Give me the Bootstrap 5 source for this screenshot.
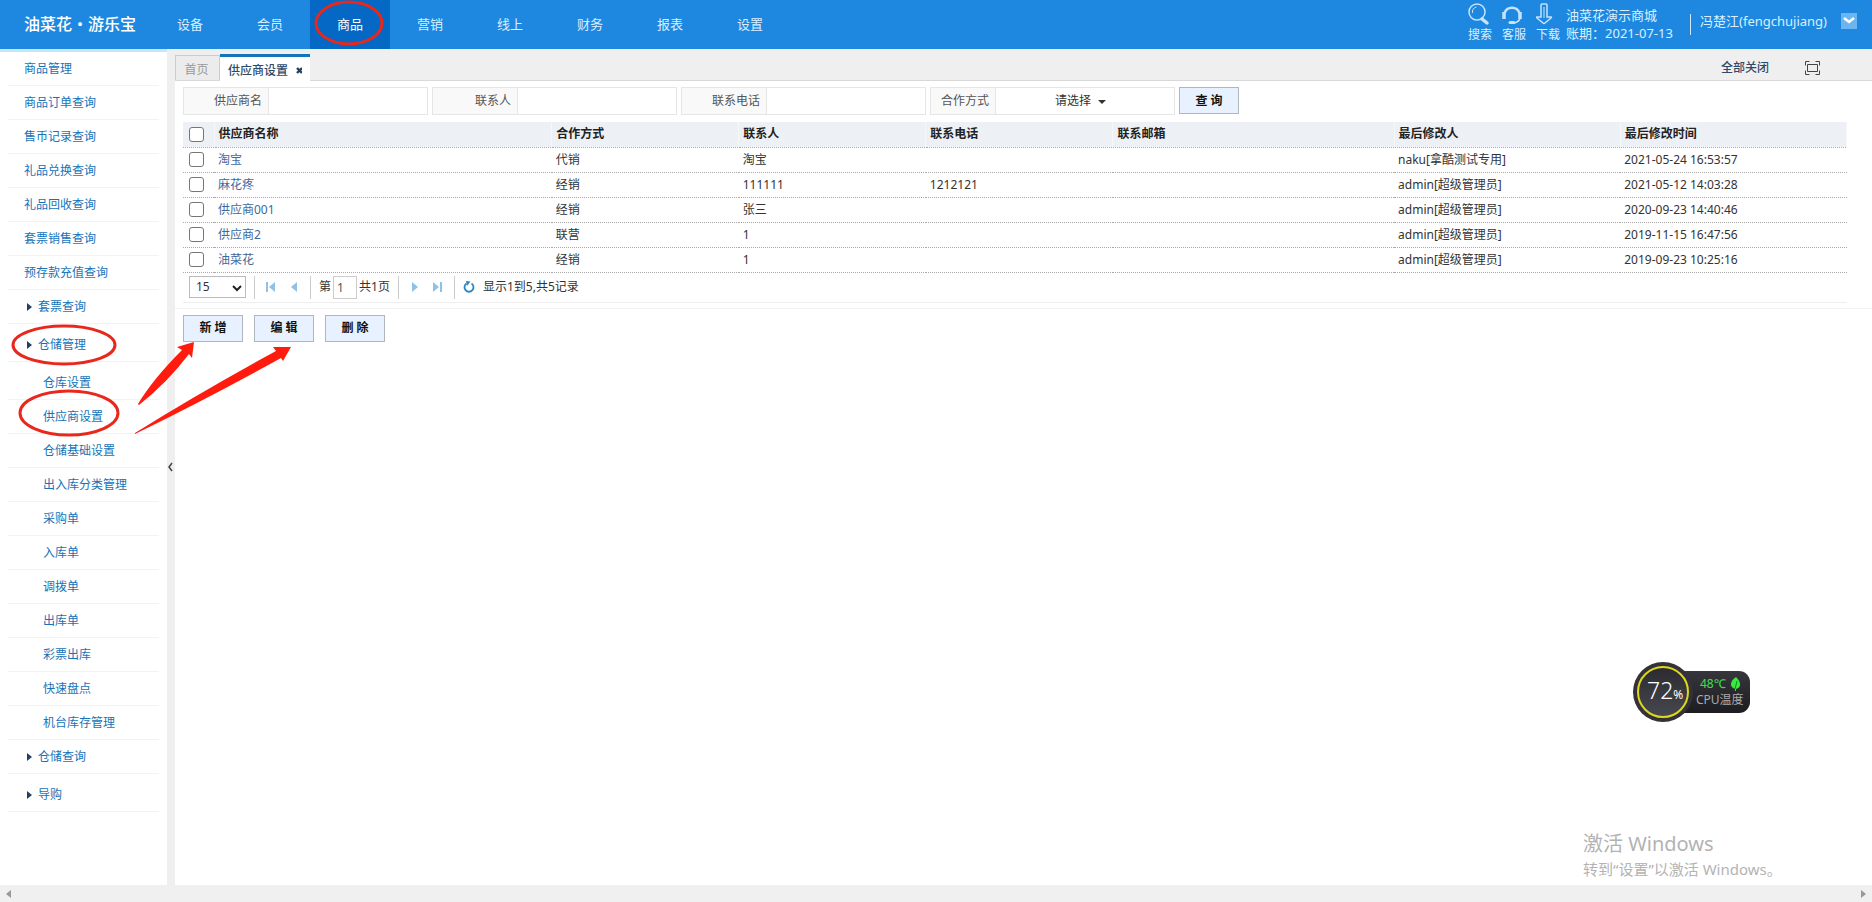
<!DOCTYPE html>
<html lang="zh-CN">
<head>
<meta charset="utf-8">
<meta name="viewport" content="width=device-width, initial-scale=1">
<title>供应商设置</title>
<link rel="stylesheet" href="https://cdn.jsdelivr.net/npm/bootstrap@5.3.0/dist/css/bootstrap.min.css">
<style>
body{font-family:"Noto Sans","Noto Sans CJK SC",sans-serif;font-size:12px;line-height:18px;color:#333;background:#fff}
a{text-decoration:none}
.topbar{height:49px;background:#1e88e1;color:#d9efff}
.topbar a{color:#d9efff}
.brand-name{width:150px;padding:0 0 2px 24px;font-size:16px;font-weight:500;color:#fff;white-space:nowrap}
.main-nav a{width:80px;height:49px;font-size:13px;position:relative;padding-bottom:2px}
.main-nav a.current{background:#0468c4;color:#fff}
.ring{position:absolute;fill:none;stroke:#e8281c;stroke-width:3;pointer-events:none;overflow:visible}
.nav-ring{left:5px;top:1px}
.quick{padding-bottom:4px}
.quick a{width:34px;line-height:18px}
.quick a:last-child{width:30px}
.quick svg{fill:none;stroke:#c4e4fd;stroke-width:1.5}
.account{font-size:13px;line-height:18px}
.store{padding-bottom:2px;width:111px}
.v-rule{width:1px;height:21px;background:#cfe8fd;margin:0 9px 0 13px}
.user-toggle{width:16px;height:16px;background:#6db5f0;border:0;margin-left:14px;margin-right:15px}
.sidebar{width:167px;border-top:3px solid #c4e7fc;padding:0 8px}
.sidebar ul{margin:0;padding:0;list-style:none}
.sidebar li a{display:flex;align-items:center;height:34px;padding-left:16px;border-bottom:1px solid #f1f3f5;color:#1673b8;position:relative}
.sidebar .sub a{padding-left:35px}
.sidebar .gap-top{padding-top:4px}
.sidebar .fold::before{content:"";border:4px solid transparent;border-left:5px solid #23415f;border-right:0;margin:1px 6px 0 3px}
.ring-a{left:5px;top:-2px}
.ring-b{left:12px;top:-10px}
.splitter{width:8px;background:#efefef}
.splitter button{border:0;background:none;width:8px;height:16px}
.tabbar{height:32px;background:#efefef;border-bottom:1px solid #d8d8d8;color:#2f4a68;font-weight:500}
.tab-home{width:45px;height:25px;border:1px solid #ccc;border-width:1px 1px 0;color:#999;font-weight:400;background:#ececec;padding-right:2px;padding-top:4px}
.tab-open{width:90px;height:27px;margin-bottom:-1px;border-top:3px solid #1275bb;background:#fff;color:#2f4a68;padding-top:4px}
.tab-open button{border:0;background:none;width:10px}
.tabbar .all-close{color:#2f4a68}
.tab-tools{margin-right:45px;padding-bottom:3px}
.workspace{padding:6px 25px 0 8px}
.filter{height:28px;border:1px solid #e6e6e6;background:#f9f9f9;width:245px;color:#555}
.filter label{padding-right:6px;text-align:right;width:84px;flex:none}
.filter .tight{width:64px}
.filter input,.filter select{border:0;border-left:1px solid #e6e6e6;background-color:#fff;min-width:0;height:26px;border-radius:0;outline:0}
.filter select{appearance:none;color:#333;padding:0 0 0 59px;background-image:url("data:image/svg+xml,%3Csvg xmlns='http://www.w3.org/2000/svg' width='8' height='4'%3E%3Cpath d='M0 0h8L4 4z' fill='%23333'/%3E%3C/svg%3E");background-repeat:no-repeat;background-position:102px 12px}
.act{width:60px;height:27px;border:1px solid #b1b6bd;background:#e8f1ff;color:#111;font-weight:700;padding:0;line-height:18px}
.grid{width:100%;table-layout:fixed;margin:7px 0 0}
.grid th,.grid td{height:25px;padding:0 4px;border-bottom:1px dotted #aaa;white-space:nowrap}
.grid th{background:#edf0f5;font-weight:700;color:#222;border-right:1px solid #f5f7f9}
.grid a{color:#40699e}
.grid .tick{padding:0 0 0 6px;line-height:0}
.grid input{appearance:none;width:15px;height:15px;border:1px solid #767676;border-radius:3px;background:#fff;margin:0;vertical-align:middle}
.c-name{width:20.3%}.c-std{width:11.25%}.c-mail{width:16.9%}.c-who{width:13.6%}.c-time{width:13.6%}
.pager{height:30px;padding-left:6px;border-bottom:1px solid #eee}
.pager select{width:57px;height:22px;border:1px solid #bbb;appearance:none;padding:0 6px;border-radius:0;color:#333;background:#fff url("data:image/svg+xml,%3Csvg xmlns='http://www.w3.org/2000/svg' width='10' height='7'%3E%3Cpath d='M1 1l4 4 4-4' fill='none' stroke='%23222' stroke-width='2'/%3E%3C/svg%3E") no-repeat 42px 8px}
.pager .page-no{width:24px;height:23px;border:1px solid #ccc;padding:0 3px;color:#555;margin:0 2px}
.pager .bar{width:1px;height:23px;background:#ccc}
.pager button{border:0;background:none;padding:0;width:12px;height:18px;line-height:0}
.pager button svg{fill:#8fc2e6}
.page-set{width:87px}
.nav-set{width:55px}
.cut{border-top:1px solid #f2f2f2;margin:5px -25px 0 -8px}
.act-row{gap:11px;padding-top:6px}
.arrows{position:absolute;left:-40px;top:290px;fill:#ff1c0e;pointer-events:none}
.monitor{position:absolute;right:122px;bottom:163px;width:117px;height:60px}
.monitor .pill{width:70px;height:42px;border-radius:0 11px 11px 0;background:linear-gradient(#36363c,#1d1c21);color:#aaa;line-height:16px}
.monitor .dial{position:absolute;left:0;top:0;width:60px;height:60px;border-radius:50%;background:#343238;padding:4px}
.monitor .face{border:2px solid #dcd91c;border-radius:50%;background:linear-gradient(#2b2b31,#47474f);color:#fff;font-size:23px;line-height:44px;font-weight:300;padding-left:8px;white-space:nowrap}
.monitor .pct{font-size:12px;font-weight:400}
.temp{color:#3fe04c}
.watermark{position:absolute;right:96px;bottom:4px;width:193px;color:#b3b3b3;font-size:15px;line-height:24px;white-space:nowrap}
.watermark strong{font-weight:400;font-size:20px}
.hscroll{height:17px;background:#f0f0f0;padding:0 6px}
.hscroll svg{fill:#999}
</style>
</head>
<body class="d-flex flex-column min-vh-100">
<header class="topbar d-flex align-items-center">
  <div class="brand-name">油菜花・游乐宝</div>
  <nav class="main-nav d-flex">
    <a class="d-flex align-items-center justify-content-center" href="#">设备</a>
    <a class="d-flex align-items-center justify-content-center" href="#">会员</a>
    <a class="current d-flex align-items-center justify-content-center" href="#">商品<svg class="ring nav-ring" width="68" height="44"><ellipse cx="34" cy="22" rx="33" ry="21"/></svg></a>
    <a class="d-flex align-items-center justify-content-center" href="#">营销</a>
    <a class="d-flex align-items-center justify-content-center" href="#">线上</a>
    <a class="d-flex align-items-center justify-content-center" href="#">财务</a>
    <a class="d-flex align-items-center justify-content-center" href="#">报表</a>
    <a class="d-flex align-items-center justify-content-center" href="#">设置</a>
  </nav>
  <div class="quick d-flex ms-auto">
    <a class="d-flex flex-column" href="#"><svg width="22" height="24"><circle cx="9" cy="10" r="8"/><path d="M4.500 11a5 5 0 0 1 4-6" stroke-width="1"/><path d="M13 17l2-2" /><path d="M14 17l5 4" stroke-width="3.500" stroke-linecap="round"/></svg>搜索</a>
    <a class="d-flex flex-column" href="#"><svg width="22" height="24"><path d="M2.500 11a8 8 0 0 1 15 0" stroke-width="2.500"/><path d="M2 10v7M18 10v7" stroke-width="3.500"/><path d="M18 17c-2 3-4 4-7 4" stroke-width="1.500"/><path d="M8 20.500h4" stroke-width="3" stroke-linecap="round"/></svg>客服</a>
    <a class="d-flex flex-column" href="#"><svg width="22" height="24"><path d="M5 3q0-1 1-1h4q1 0 1 1v12h4q1 0 0 1l-6 5q-1 1-2 0l-6-5q-1-1 0-1h4z"/><path d="M8 5v11" stroke-width="1"/></svg>下载</a>
  </div>
  <div class="account store">油菜花演示商城<br>账期：2021-07-13</div>
  <div class="v-rule"></div>
  <a class="account pb-2" href="#">冯楚江(fengchujiang)</a>
  <button class="user-toggle p-0 d-flex align-items-center justify-content-center mb-2" aria-label="账户菜单"><svg width="12" height="8"><path d="M1 1l5 4 5-4" fill="none" stroke="#fff" stroke-width="2.5"/></svg></button>
</header>

<div class="d-flex flex-grow-1">
  <aside class="sidebar flex-shrink-0">
    <ul>
      <li><a href="#">商品管理</a></li>
      <li><a href="#">商品订单查询</a></li>
      <li><a href="#">售币记录查询</a></li>
      <li><a href="#">礼品兑换查询</a></li>
      <li><a href="#">礼品回收查询</a></li>
      <li><a href="#">套票销售查询</a></li>
      <li><a href="#">预存款充值查询</a></li>
      <li><a class="fold" href="#">套票查询</a></li>
      <li class="gap-top"><a class="fold" href="#">仓储管理<svg class="ring ring-a" width="102" height="39"><ellipse cx="51" cy="19" rx="51" ry="19"/></svg></a>
        <ul class="sub gap-top">
          <li><a href="#">仓库设置</a></li>
          <li><a href="#">供应商设置<svg class="ring ring-b" width="98" height="46"><ellipse cx="49" cy="23" rx="49" ry="22"/></svg></a></li>
          <li><a href="#">仓储基础设置</a></li>
          <li><a href="#">出入库分类管理</a></li>
          <li><a href="#">采购单</a></li>
          <li><a href="#">入库单</a></li>
          <li><a href="#">调拨单</a></li>
          <li><a href="#">出库单</a></li>
          <li><a href="#">彩票出库</a></li>
          <li><a href="#">快速盘点</a></li>
          <li><a href="#">机台库存管理</a></li>
        </ul>
      </li>
      <li><a class="fold" href="#">仓储查询</a></li>
      <li class="gap-top"><a class="fold" href="#">导购</a></li>
    </ul>
  </aside>
  <div class="splitter flex-shrink-0 d-flex align-items-center">
    <button class="p-0 d-flex align-items-center" aria-label="收起菜单"><svg width="7" height="10"><path d="M5 1L2 5l3 4" fill="none" stroke="#444" stroke-width="1.5"/></svg></button>
  </div>
  <main class="flex-grow-1 position-relative">
    <div class="tabbar d-flex align-items-end">
      <a class="tab-home d-flex align-items-center justify-content-center" href="#">首页</a>
      <div class="tab-open d-flex align-items-center ps-2">供应商设置<button class="p-0 ms-1 d-flex" aria-label="关闭标签"><svg class="ms-1" width="8" height="8"><path d="M1 1l5 5M6 1L1 6" stroke="#23415f" stroke-width="2.4"/></svg></button></div>
      <div class="tab-tools d-flex align-items-center ms-auto">
        <a class="all-close me-4" href="#">全部关闭</a>
        <svg class="ms-2 me-1" width="22" height="14" fill="none" stroke="#444"><path d="M4.500 4.500v-4h4M14.500.500h4v4M18.500 9.500v4h-4M8.500 13.500h-4v-4M6.500 3.500h10v7h-10z"/></svg>
      </div>
    </div>
    <div class="workspace">
      <form class="d-flex gap-1">
        <div class="filter d-flex align-items-center"><label for="f1">供应商名</label><input id="f1" class="flex-grow-1" type="text"></div>
        <div class="filter d-flex align-items-center"><label for="f2">联系人</label><input id="f2" class="flex-grow-1" type="text"></div>
        <div class="filter d-flex align-items-center"><label for="f3">联系电话</label><input id="f3" class="flex-grow-1" type="text"></div>
        <div class="filter d-flex align-items-center"><label class="tight" for="f4">合作方式</label><select id="f4" class="flex-grow-1"><option>请选择</option></select></div>
        <button class="act" type="button">查 询</button>
      </form>
      <table class="grid">
        <colgroup><col width="31"><col class="c-name"><col class="c-std"><col class="c-std"><col class="c-std"><col class="c-mail"><col class="c-who"><col class="c-time"></colgroup>
        <thead><tr><th class="tick"><input type="checkbox" aria-label="全选"></th><th>供应商名称</th><th>合作方式</th><th>联系人</th><th>联系电话</th><th>联系邮箱</th><th>最后修改人</th><th>最后修改时间</th></tr></thead>
        <tbody>
          <tr><td class="tick"><input type="checkbox" aria-label="淘宝"></td><td><a href="#">淘宝</a></td><td>代销</td><td>淘宝</td><td></td><td></td><td>naku[拿酷测试专用]</td><td>2021-05-24 16:53:57</td></tr>
          <tr><td class="tick"><input type="checkbox" aria-label="麻花疼"></td><td><a href="#">麻花疼</a></td><td>经销</td><td>111111</td><td>1212121</td><td></td><td>admin[超级管理员]</td><td>2021-05-12 14:03:28</td></tr>
          <tr><td class="tick"><input type="checkbox" aria-label="供应商001"></td><td><a href="#">供应商001</a></td><td>经销</td><td>张三</td><td></td><td></td><td>admin[超级管理员]</td><td>2020-09-23 14:40:46</td></tr>
          <tr><td class="tick"><input type="checkbox" aria-label="供应商2"></td><td><a href="#">供应商2</a></td><td>联营</td><td>1</td><td></td><td></td><td>admin[超级管理员]</td><td>2019-11-15 16:47:56</td></tr>
          <tr><td class="tick"><input type="checkbox" aria-label="油菜花"></td><td><a href="#">油菜花</a></td><td>经销</td><td>1</td><td></td><td></td><td>admin[超级管理员]</td><td>2019-09-23 10:25:16</td></tr>
        </tbody>
      </table>
      <div class="pager d-flex align-items-center">
        <select class="me-2" aria-label="每页条数"><option>15</option></select>
        <span class="bar"></span>
        <div class="nav-set d-flex justify-content-evenly"><button aria-label="第一页"><svg width="10" height="10"><path d="M0 0h2v10H0zM9 0v10L3 5z"/></svg></button><button aria-label="上一页"><svg width="8" height="10"><path d="M7 0v10L1 5z"/></svg></button></div>
        <span class="bar"></span>
        <div class="page-set d-flex align-items-center justify-content-center"><label for="pg">第</label><input id="pg" class="page-no" type="text" value="1"><span>共1页</span></div>
        <span class="bar"></span>
        <div class="nav-set d-flex justify-content-evenly"><button aria-label="下一页"><svg width="8" height="10"><path d="M1 0v10l6-5z"/></svg></button><button aria-label="最后一页"><svg width="10" height="10"><path d="M7 0h2v10H7zM0 0v10l6-5z"/></svg></button></div>
        <span class="bar"></span>
        <button class="mx-2" aria-label="刷新"><svg width="12" height="12"><path d="M3.500 2.500a4.500 4.500 0 1 0 5 0" fill="none" stroke="#2a86c5" stroke-width="1.800"/><path d="M3 0l4.500.500L4 5z" fill="#2a86c5"/></svg></button>
        <span>显示1到5,共5记录</span>
      </div>
      <div class="cut"></div>
      <div class="act-row d-flex"><button class="act">新 增</button><button class="act">编 辑</button><button class="act">删 除</button></div>
    </div>
    <svg class="arrows" width="160" height="100"><path d="M59 3L42 8l5 3Q18 40 3 65l1 1Q32 44 54 15l3 4zM156 8h-18l3 4Q64 54 0 94v1Q72 60 146 19l2 3z"/></svg>
    <div class="monitor d-flex align-items-center justify-content-end">
      <div class="pill d-flex flex-column justify-content-center ps-3"><span class="temp d-flex align-items-center gap-1 ps-1">48℃ <svg width="11" height="14"><path d="M6 0c5 5 6 10 0 12v2H5v-2C-1 10 0 4 6 0z" fill="#3be83f"/><path d="M7 4L5 12" stroke="#0b8a18"/></svg></span><span>CPU温度</span></div>
      <div class="dial"><div class="face w-100 h-100">72<span class="pct">%</span></div></div>
    </div>
    <div class="watermark"><strong>激活 Windows</strong><br>转到“设置”以激活 Windows。</div>
  </main>
</div>
<div class="hscroll d-flex align-items-center justify-content-between"><svg width="5" height="8"><path d="M5 0v8L0 4z"/></svg><svg width="5" height="8"><path d="M0 0v8l5-4z"/></svg></div>
<script src="https://cdn.jsdelivr.net/npm/bootstrap@5.3.0/dist/js/bootstrap.bundle.min.js"></script>
</body>
</html>
